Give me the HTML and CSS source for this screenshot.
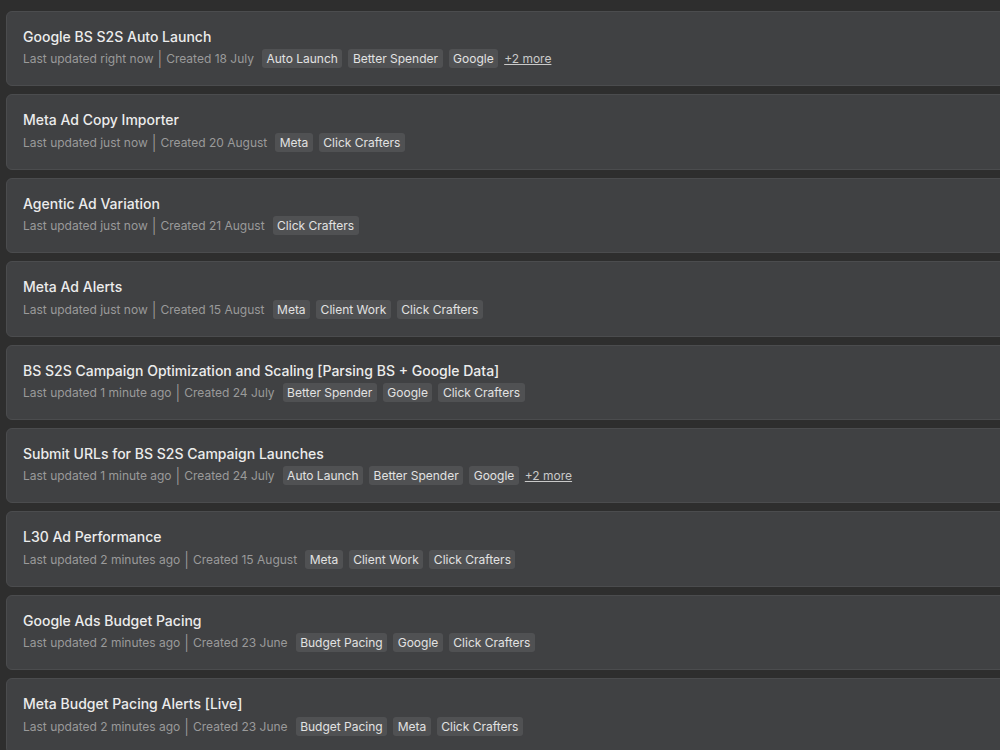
FILE: index.html
```html
<!DOCTYPE html>
<html lang="en">
<head>
  <meta charset="UTF-8">
  <meta name="viewport" content="width=device-width, initial-scale=1.0">
  <title>Workflows</title>
  <link rel="stylesheet" href="styles.css">
</head>
<body>
  <div class="list">
    <div class="card">
      <div class="title">Google BS S2S Auto Launch</div>
      <div class="meta">
        <span>Last updated right now</span><span class="sep">|</span><span>Created 18 July</span>
        <div class="tags"><span class="tag">Auto Launch</span><span class="tag">Better Spender</span><span class="tag">Google</span><a class="more" href="#">+2 more</a></div>
      </div>
    </div>
    <div class="card">
      <div class="title">Meta Ad Copy Importer</div>
      <div class="meta">
        <span>Last updated just now</span><span class="sep">|</span><span>Created 20 August</span>
        <div class="tags"><span class="tag">Meta</span><span class="tag">Click Crafters</span></div>
      </div>
    </div>
    <div class="card">
      <div class="title">Agentic Ad Variation</div>
      <div class="meta">
        <span>Last updated just now</span><span class="sep">|</span><span>Created 21 August</span>
        <div class="tags"><span class="tag">Click Crafters</span></div>
      </div>
    </div>
    <div class="card">
      <div class="title">Meta Ad Alerts</div>
      <div class="meta">
        <span>Last updated just now</span><span class="sep">|</span><span>Created 15 August</span>
        <div class="tags"><span class="tag">Meta</span><span class="tag">Client Work</span><span class="tag">Click Crafters</span></div>
      </div>
    </div>
    <div class="card">
      <div class="title">BS S2S Campaign Optimization and Scaling [Parsing BS + Google Data]</div>
      <div class="meta">
        <span>Last updated 1 minute ago</span><span class="sep">|</span><span>Created 24 July</span>
        <div class="tags"><span class="tag">Better Spender</span><span class="tag">Google</span><span class="tag">Click Crafters</span></div>
      </div>
    </div>
    <div class="card">
      <div class="title">Submit URLs for BS S2S Campaign Launches</div>
      <div class="meta">
        <span>Last updated 1 minute ago</span><span class="sep">|</span><span>Created 24 July</span>
        <div class="tags"><span class="tag">Auto Launch</span><span class="tag">Better Spender</span><span class="tag">Google</span><a class="more" href="#">+2 more</a></div>
      </div>
    </div>
    <div class="card">
      <div class="title">L30 Ad Performance</div>
      <div class="meta">
        <span>Last updated 2 minutes ago</span><span class="sep">|</span><span>Created 15 August</span>
        <div class="tags"><span class="tag">Meta</span><span class="tag">Client Work</span><span class="tag">Click Crafters</span></div>
      </div>
    </div>
    <div class="card">
      <div class="title">Google Ads Budget Pacing</div>
      <div class="meta">
        <span>Last updated 2 minutes ago</span><span class="sep">|</span><span>Created 23 June</span>
        <div class="tags"><span class="tag">Budget Pacing</span><span class="tag">Google</span><span class="tag">Click Crafters</span></div>
      </div>
    </div>
    <div class="card">
      <div class="title">Meta Budget Pacing Alerts [Live]</div>
      <div class="meta">
        <span>Last updated 2 minutes ago</span><span class="sep">|</span><span>Created 23 June</span>
        <div class="tags"><span class="tag">Budget Pacing</span><span class="tag">Meta</span><span class="tag">Click Crafters</span></div>
      </div>
    </div>
  </div>
</body>
</html>
```

FILE: styles.css
```css
/* Dark workflow list */
body {
  font-family: Inter, "Noto Sans", sans-serif;
  background-color: #2e2e2e;
  margin: 0;
  overflow: hidden;
}
.list {
  display: flex;
  flex-direction: column;
  gap: 8px;
  padding: 11px 0 0 6px;
  width: 1020px;
}
.card {
  background: #404143;
  border: 1px solid #4b4c4e;
  border-radius: 6px;
  padding: 15px 16px 17px;
  display: flex;
  flex-direction: column;
  gap: 2.4px;
}
.title {
  font-size: 14px;
  font-weight: 500;
  color: #ececec;
  line-height: 20px;
}
.meta {
  display: flex;
  align-items: center;
  font-size: 12px;
  color: #9a9a9a;
  line-height: 19px;
}
.sep {
  color: #a0a0a0;
  margin: 0 4px;
  font-size: 15px;
  font-weight: 300;
}
.tags {
  display: flex;
  align-items: center;
  gap: 6px;
  margin-left: 8px;
}
.tag {
  background: #505153;
  color: #e2e2e2;
  border-radius: 3px;
  padding: 0 4.5px;
}
.more {
  color: #c9c9c9;
  text-decoration: underline;
}
```
